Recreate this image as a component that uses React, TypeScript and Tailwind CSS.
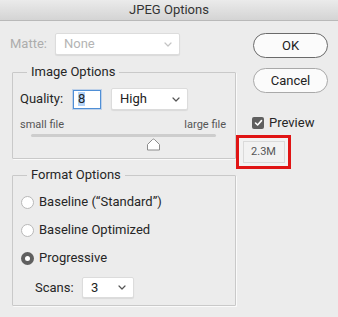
import React from "react";

function Chevron({ color = "#666" }: { color?: string }) {
  return (
    <svg width="8" height="5" viewBox="0 0 8 5" className="shrink-0">
      <path d="M1 1 L4 4 L7 1" fill="none" stroke={color} strokeWidth="1.2" strokeLinecap="round" strokeLinejoin="round" />
    </svg>
  );
}

function Select({ value, w, disabled }: { value: string; w: string; disabled?: boolean }) {
  return (
    <div
      className={`${w} h-full flex items-center justify-between pl-[8px] pr-[7px] bg-white border border-[#dcdcdc] rounded-[2px] shadow-[0_1px_1px_rgba(0,0,0,0.08)] ${
        disabled ? "text-[#b4b4b4] bg-[#f7f7f7]" : "text-[#222]"
      }`}
    >
      <span>{value}</span>
      <Chevron color={disabled ? "#c4c4c4" : "#555"} />
    </div>
  );
}

function Radio({ checked, label }: { checked?: boolean; label: string }) {
  return (
    <div className="h-[28px] flex items-center pl-[8px]">
      {checked ? (
        <div className="w-[13px] h-[13px] rounded-full bg-[#5f5f5f] flex items-center justify-center">
          <div className="w-[5px] h-[5px] rounded-full bg-white" />
        </div>
      ) : (
        <div className="w-[13px] h-[13px] rounded-full bg-white border border-[#b8b8b8]" />
      )}
      <span className="ml-[5px] text-[#262626]">{label}</span>
    </div>
  );
}

export default function App() {
  return (
    <div
      className="w-[338px] h-[317px] bg-[#ececec] flex flex-col text-[13px] leading-[16px] overflow-hidden"
      style={{ fontFamily: "Roboto, 'Liberation Sans', sans-serif" }}
    >
      <div className="h-[21px] shrink-0 border-b border-[#b9b9b9] bg-gradient-to-b from-[#ebebeb] to-[#d4d4d4] flex items-center justify-center text-[#333]">
        JPEG Options
      </div>
      <div className="flex flex-1">
        {/* left column */}
        <div className="w-[236px] shrink-0 pl-[10px] flex flex-col">
          <div className="mt-[12px] h-[22px] flex items-center">
            <span className="text-[#adadad] w-[45px]">Matte:</span>
            <Select value="None" w="w-[125px]" disabled />
          </div>

          <fieldset className="ml-[2px] mt-[9px] h-[95px] border border-[#c9c9c9] shadow-[1px_1px_0_#fafafa] rounded-[1px]">
            <legend className="ml-[14px] px-[4px] text-[#262626] leading-[16px]">Image Options</legend>
            <div className="mt-[8px] h-[22px] flex items-center pl-[7px]">
              <span className="text-[#262626] w-[53px]">Quality:</span>
              <div className="w-[28px] h-[19px] bg-white border border-[#4f8fd6] shadow-[0_0_0_1px_rgba(110,160,225,0.35)] flex items-center pl-[4px]">
                <span className="bg-[#b4d4f8] text-[#222] leading-[14px]">8</span>
              </div>
              <div className="ml-[10px] h-[22px]">
                <Select value="High" w="w-[77px]" />
              </div>
            </div>
            <div className="mt-[8px] flex justify-between pl-[7px] pr-[9px] text-[11px] leading-[13px] text-[#555]">
              <span>small file</span>
              <span>large file</span>
            </div>
            <div className="relative mt-[3px] ml-[18px] w-[185px] h-[3px] bg-[#cdcdcd] rounded-full">
              <svg width="15" height="13" viewBox="0 0 15 13" className="absolute left-[115px] top-[4px]">
                <path d="M7.5 1 Q8 1 8.6 1.6 L13.5 6.5 L13.5 12 L1.5 12 L1.5 6.5 L6.4 1.6 Q7 1 7.5 1 Z" fill="#ffffff" stroke="#8c8c8c" strokeWidth="1" />
              </svg>
            </div>
          </fieldset>

          <fieldset className="ml-[2px] mt-[8px] h-[139px] border border-[#c9c9c9] shadow-[1px_1px_0_#fafafa] rounded-[1px]">
            <legend className="ml-[14px] px-[4px] text-[#262626] leading-[16px]">Format Options</legend>
            <div className="mt-[5px] flex flex-col">
              <Radio label="Baseline (“Standard”)" />
              <Radio label="Baseline Optimized" />
              <Radio checked label="Progressive" />
            </div>
            <div className="mt-[5px] h-[21px] flex items-center pl-[22px]">
              <span className="text-[#262626] w-[47px]">Scans:</span>
              <Select value="3" w="w-[52px]" />
            </div>
          </fieldset>
        </div>

        {/* right column */}
        <div className="flex-1 flex flex-col">
          <button className="ml-[17px] mt-[12px] w-[75px] h-[25px] rounded-full border border-[#6a6a6a] bg-[#fbfbfb] text-[#222] flex items-center justify-center">
            OK
          </button>
          <button className="ml-[17px] mt-[10px] w-[75px] h-[25px] rounded-full border border-[#a9a9a9] bg-[#fbfbfb] text-[#222] flex items-center justify-center">
            Cancel
          </button>
          <div className="ml-[16px] mt-[24px] h-[11px] flex items-center">
            <div className="w-[12px] h-[12px] rounded-[2px] bg-[#5f5f5f] flex items-center justify-center">
              <svg width="9" height="8" viewBox="0 0 9 8">
                <path d="M1.5 4 L3.6 6 L7.5 1.6" fill="none" stroke="#fff" strokeWidth="1.6" strokeLinecap="round" strokeLinejoin="round" />
              </svg>
            </div>
            <span className="ml-[5px] text-[#262626]">Preview</span>
          </div>
          <div className="mt-[7px] w-[55px] h-[34px] border-[3px] border-[#e01414] bg-[#f2f2f2] flex items-center justify-center">
            <div className="w-[42px] h-[22px] border border-[#dadada] flex items-center justify-center text-[11px] text-[#555]">
              2.3M
            </div>
          </div>
        </div>
      </div>
    </div>
  );
}
